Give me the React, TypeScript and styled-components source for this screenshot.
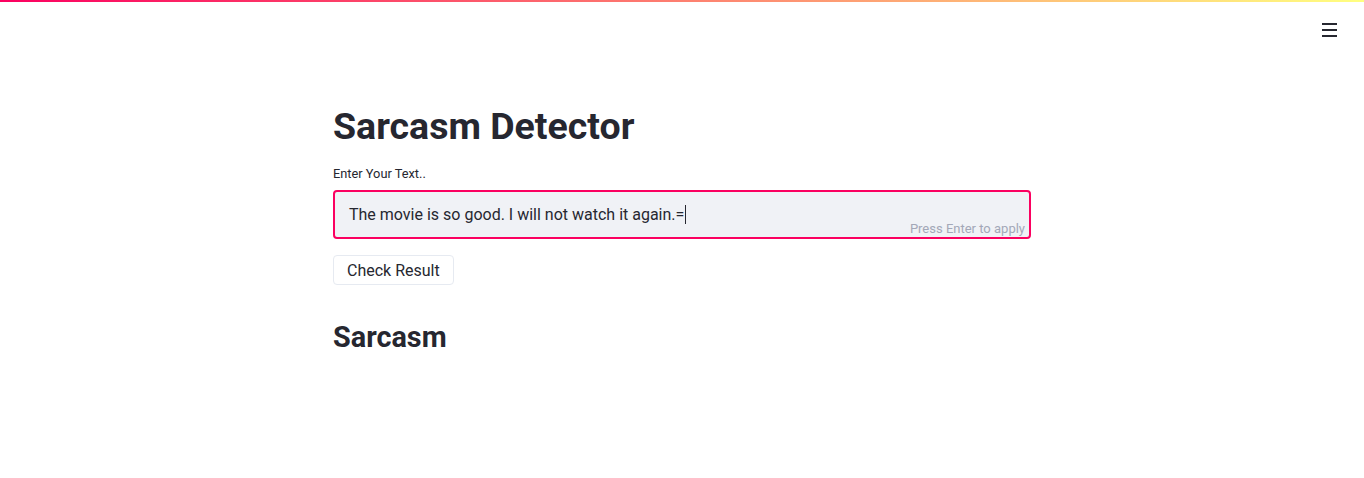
import React from "react";
import styled, { createGlobalStyle } from "styled-components";

const GlobalStyle = createGlobalStyle`
  html, body { margin: 0; padding: 0; background: #ffffff; }
  body {
    font-family: Roboto, "Noto Sans", "Liberation Sans", sans-serif;
    color: #262730;
  }
`;

const PRIMARY = "#fb0060";

const Decoration = styled.div`
  height: 2px;
  background: linear-gradient(90deg, ${PRIMARY}, #ffff80);
`;

const Header = styled.header`
  display: flex;
  justify-content: flex-end;
  padding: 19px 27px 0 0;
  height: 40px;
  box-sizing: border-box;
`;

const MenuButton = styled.button`
  display: flex;
  flex-direction: column;
  gap: 4px;
  width: 15px;
  padding: 0;
  border: none;
  background: transparent;
  cursor: pointer;
  margin-top: 2px;
`;

const MenuLine = styled.span`
  display: block;
  width: 15px;
  height: 2px;
  background: #262730;
`;

const Main = styled.main`
  width: 698px;
  margin: 0 auto;
  padding-top: 58px;
  display: flex;
  flex-direction: column;
`;

const Title = styled.h1`
  margin: 0;
  font-size: 37.5px;
  font-weight: 700;
  line-height: 52px;
  color: #262730;
`;

const Label = styled.label`
  display: block;
  font-size: 12.8px;
  margin-top: 14px;
  margin-bottom: 9px;
  color: #262730;
`;

const InputBox = styled.div`
  position: relative;
  height: 49px;
  box-sizing: border-box;
  border: 2px solid ${PRIMARY};
  border-radius: 4px;
  background: #f0f2f6;
  display: flex;
  align-items: center;
  padding: 0 14px;
  font-size: 16px;
  color: #262730;
`;

const Caret = styled.span`
  display: inline-block;
  width: 1px;
  height: 19px;
  background: #262730;
  vertical-align: -4px;
  margin-left: 1px;
`;

const Hint = styled.span`
  position: absolute;
  right: 4px;
  bottom: 1px;
  font-size: 13px;
  color: #a3a8b8;
`;

const Button = styled.button`
  align-self: flex-start;
  margin-top: 16px;
  height: 30px;
  padding: 0 13px;
  font-family: inherit;
  font-size: 16px;
  color: #262730;
  background: #ffffff;
  border: 1px solid #e6eaf1;
  border-radius: 4px;
`;

const Result = styled.h3`
  margin: 34px 0 0;
  font-size: 28.8px;
  font-weight: 700;
  line-height: 36px;
  color: #262730;
`;

export default function App() {
  return (
    <>
      <GlobalStyle />
      <Decoration />
      <Header>
        <MenuButton aria-label="menu">
          <MenuLine />
          <MenuLine />
          <MenuLine />
        </MenuButton>
      </Header>
      <Main>
        <Title>Sarcasm Detector</Title>
        <Label>Enter Your Text..</Label>
        <InputBox>
          <span>
            The movie is so good. I will not watch it again.=
            <Caret />
          </span>
          <Hint>Press Enter to apply</Hint>
        </InputBox>
        <Button>Check Result</Button>
        <Result>Sarcasm</Result>
      </Main>
    </>
  );
}
